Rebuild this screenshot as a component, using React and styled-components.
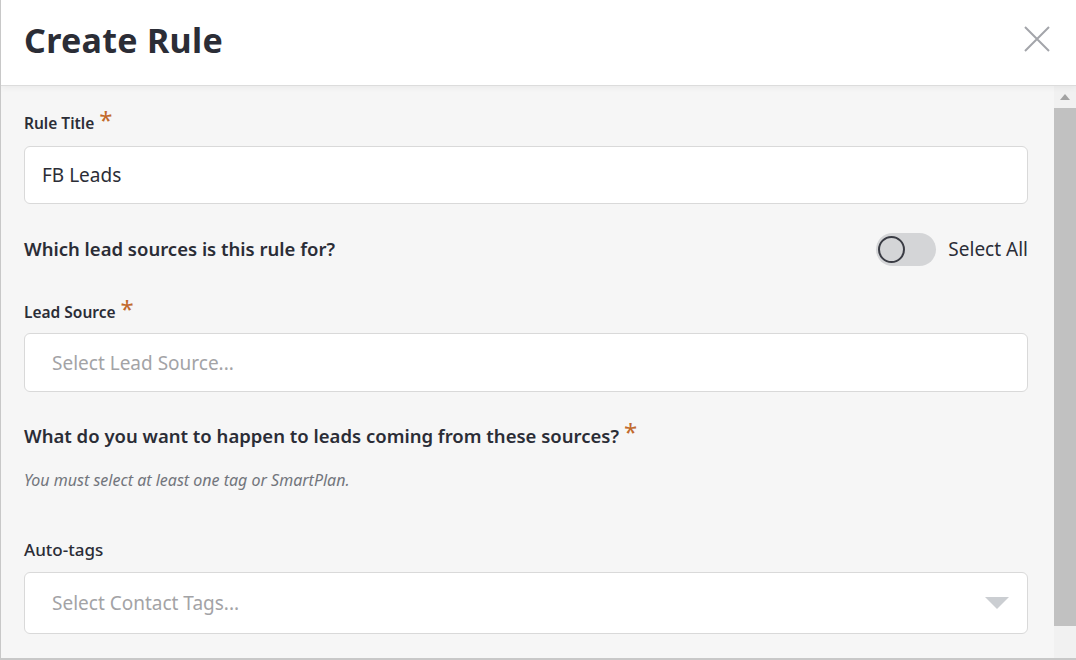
import React from 'react';
import styled, { createGlobalStyle } from 'styled-components';

const Global = createGlobalStyle`
  html, body { margin: 0; padding: 0; background: #fff; }
  body { font-family: "Noto Sans", Lato, sans-serif; color: #2b2d33; }
  * { box-sizing: border-box; }
`;

const Modal = styled.div`
  width: 1076px;
  height: 660px;
  border-left: 1px solid #c8c8c8;
  border-bottom: 2px solid #c8c8c8;
  display: flex;
  flex-direction: column;
  overflow: hidden;
`;

const Header = styled.div`
  height: 86px;
  flex: none;
  display: flex;
  align-items: center;
  justify-content: space-between;
  padding: 0 26px 0 23px;
  border-bottom: 1px solid #dcdcdc;
  background: #fff;
  box-shadow: 0 2px 6px rgba(0, 0, 0, 0.05);
  position: relative;
  z-index: 1;
`;

const Title = styled.h1`
  margin: 0 0 6px;
  font-size: 34px;
  line-height: 40px;
  font-weight: 700;
  color: #2b2d36;
  letter-spacing: 0.3px;
`;

const Close = styled.button`
  border: 0;
  background: none;
  padding: 0;
  margin-bottom: 8px;
  display: flex;
`;

const Body = styled.div`
  flex: 1;
  display: flex;
  background: #f6f6f6;
  min-height: 0;
`;

const Content = styled.div`
  flex: 1;
  padding: 26px 26px 0 23px;
  display: flex;
  flex-direction: column;
`;

const Scrollbar = styled.div`
  width: 22px;
  background: #f1f1f1;
  display: flex;
  flex-direction: column;
  align-items: center;
`;

const Arrow = styled.div`
  margin: 8px 0 8px;
  width: 0;
  height: 0;
  border-left: 5px solid transparent;
  border-right: 5px solid transparent;
  border-bottom: 6px solid #a3a3a3;
`;

const Thumb = styled.div`
  width: 22px;
  height: 518px;
  background: #c1c1c1;
`;

const Label = styled.label`
  display: flex;
  align-items: flex-start;
  font-size: ${p => (p.$big ? '17px' : '15.5px')};
  line-height: 22px;
  font-weight: ${p => (p.$big ? 500 : 600)};
  color: #2b2d36;
  margin-top: ${p => p.$top || 0}px;
  height: 22px;
`;

const Star = styled.span`
  color: #c26a2c;
  font-size: 24px;
  line-height: 22px;
  margin-left: 5px;
  margin-top: -3px;
  font-weight: 400;
`;

const Field = styled.div`
  height: ${p => p.$h || 59}px;
  margin-top: ${p => p.$top || 0}px;
  background: #fff;
  border: 1px solid #d9d9d9;
  border-radius: 6px;
  display: flex;
  align-items: center;
  justify-content: space-between;
  padding: 0 18px 0 ${p => p.$pad || 27}px;
  font-size: 19px;
  color: ${p => (p.$placeholder ? '#a3a3a6' : '#2b2d36')};
`;

const Row = styled.div`
  display: flex;
  align-items: center;
  justify-content: space-between;
  margin-top: 29px;
  height: 32px;
`;

const Question = styled.div`
  font-size: 18.5px;
  line-height: 24px;
  font-weight: 600;
  color: #2b2d36;
  display: flex;
  align-items: flex-start;
  margin-top: ${p => p.$top || 0}px;
`;

const ToggleWrap = styled.div`
  display: flex;
  align-items: center;
  gap: 12px;
  font-size: 19px;
  color: #2b2d36;
`;

const Track = styled.div`
  width: 60px;
  height: 33px;
  border-radius: 17px;
  background: #d4d5d7;
  display: flex;
  align-items: center;
  padding-left: 2px;
`;

const Knob = styled.div`
  width: 27px;
  height: 27px;
  border-radius: 50%;
  border: 2px solid #3a3c44;
  background: #d4d5d7;
`;

const Note = styled.div`
  margin-top: 22px;
  font-size: 16px;
  line-height: 20px;
  font-style: italic;
  color: #72757c;
`;

const Caret = styled.div`
  width: 0;
  height: 0;
  border-left: 12px solid transparent;
  border-right: 12px solid transparent;
  border-top: 12px solid #cbced2;
`;

export default function App() {
  return (
    <>
      <Global />
      <Modal>
        <Header>
          <Title>Create Rule</Title>
          <Close>
            <svg width="26" height="26" viewBox="0 0 26 26">
              <path d="M1 1L25 25M25 1L1 25" stroke="#a3a5aa" strokeWidth="2" />
            </svg>
          </Close>
        </Header>
        <Body>
          <Content>
            <Label>Rule Title<Star>*</Star></Label>
            <Field $top={12} $h={58} $pad={17}>FB Leads</Field>
            <Row>
              <Question>Which lead sources is this rule for?</Question>
              <ToggleWrap>
                <Track><Knob /></Track>
                Select All
              </ToggleWrap>
            </Row>
            <Label $top={36}>Lead Source<Star>*</Star></Label>
            <Field $top={10} $placeholder>Select Lead Source...</Field>
            <Question $top={32}>What do you want to happen to leads coming from these sources?<Star>*</Star></Question>
            <Note>You must select at least one tag or SmartPlan.</Note>
            <Label $big $top={49}>Auto-tags</Label>
            <Field $top={11} $h={62} $placeholder>
              Select Contact Tags...
              <Caret />
            </Field>
          </Content>
          <Scrollbar>
            <Arrow />
            <Thumb />
          </Scrollbar>
        </Body>
      </Modal>
    </>
  );
}
